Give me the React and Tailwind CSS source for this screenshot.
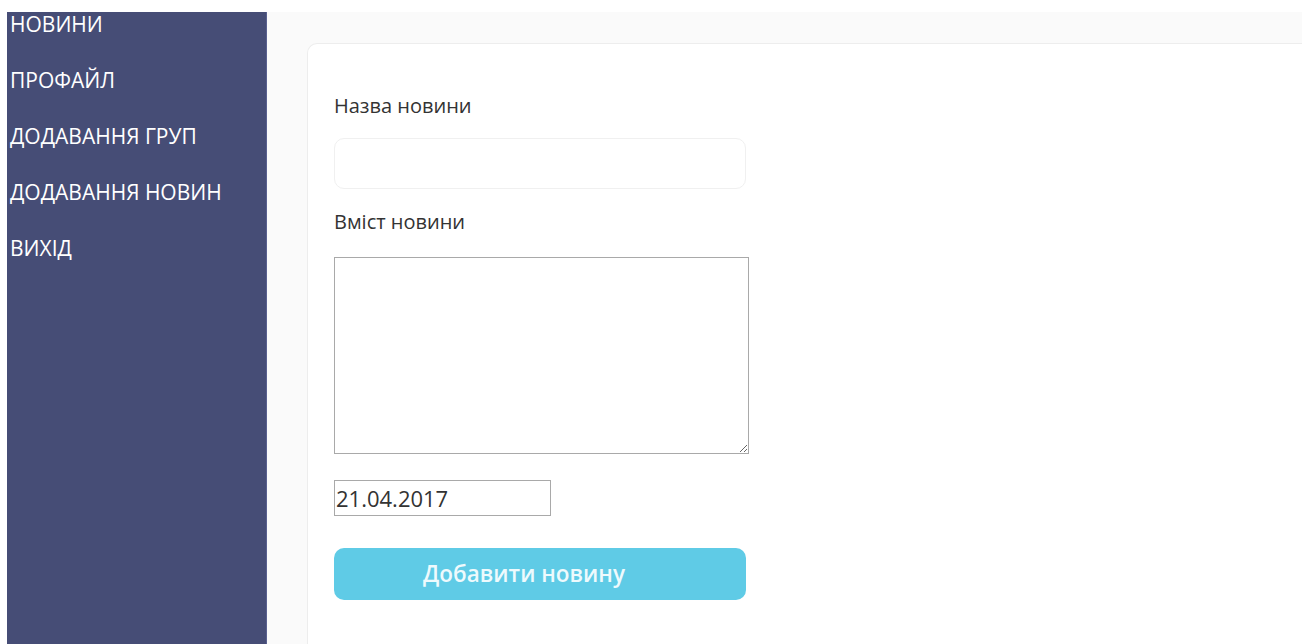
const menu = ['НОВИНИ', 'ПРОФАЙЛ', 'ДОДАВАННЯ ГРУП', 'ДОДАВАННЯ НОВИН', 'ВИХІД']

function Sidebar() {
  return (
    <aside className="w-[260px] shrink-0 bg-[#464d76] border-r border-[#5a6190] pl-[3px]">
      <ul className="flex flex-col gap-[32px]">
        {menu.map((item) => (
          <li key={item}>
            <a href="#" className="block text-[21px] leading-[24px] font-medium text-white">
              {item}
            </a>
          </li>
        ))}
      </ul>
    </aside>
  )
}

function NewsForm() {
  return (
    <form className="flex flex-col w-[416px]" onSubmit={(e) => e.preventDefault()}>
      <label className="text-[20px] leading-[26px] text-[#333]">Назва новини</label>
      <input
        type="text"
        className="mt-[19px] w-[412px] h-[51px] rounded-[10px] border border-[#f0f0f0] bg-white px-3 outline-none"
      />
      <label className="mt-[20px] text-[20px] leading-[26px] text-[#333]">Вміст новини</label>
      <textarea className="mt-[22px] w-[415px] h-[197px] border border-[#a9a9a9] bg-white" />
      <input
        type="text"
        defaultValue="21.04.2017"
        className="mt-[26px] w-[217px] h-[36px] border border-[#a9a9a9] px-[1px] text-[22px] text-[#333] outline-none"
      />
      <button
        type="submit"
        className="mt-[32px] w-[412px] h-[52px] rounded-[10px] bg-[#5fcbe6] pr-[32px] text-[22.5px] font-semibold text-[#eefafd]"
      >
        Добавити новину
      </button>
    </form>
  )
}

export default function App() {
  return (
    <div className="h-[644px] bg-white pt-[12px] pl-[7px] flex overflow-hidden font-['Open_Sans',sans-serif]">
      <Sidebar />
      <main className="flex-1 bg-[#fafafa] pt-[31px] pl-[40px]">
        <div className="h-full bg-white rounded-tl-[10px] border-t border-l border-[#ededed] pt-[49px] pl-[26px]">
          <NewsForm />
        </div>
      </main>
    </div>
  )
}
